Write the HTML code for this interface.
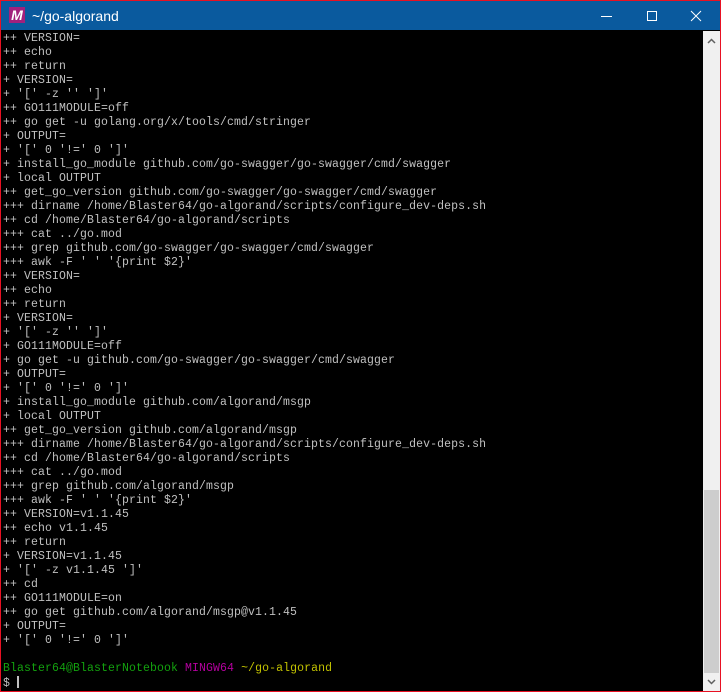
<!DOCTYPE html>
<html><head><style>
html,body{margin:0;padding:0;}
body{width:721px;height:692px;background:#000;position:relative;overflow:hidden;}
.frame{position:absolute;left:0;top:0;width:719px;height:690px;border:1px solid #e81123;}
.title{position:absolute;left:1px;top:1px;width:719px;height:29px;background:#0a5a9e;color:#fff;font:14px "Liberation Sans",sans-serif;}
.icon{position:absolute;left:8px;top:6px;width:16px;height:16px;background:#a2217d;color:#fff;font:bold italic 14px/16px "Liberation Sans",sans-serif;text-align:center;}
.tt{position:absolute;left:31px;top:7px;}
.term{position:absolute;left:3px;top:32px;width:700px;margin:0;color:#c0c0c0;font:11.5px/14px "Liberation Mono",monospace;letter-spacing:0.1px;white-space:pre;}
.sb{position:absolute;left:703px;top:31px;width:17px;height:660px;background:#f0f0f0;}
.thumb{position:absolute;left:1px;top:459px;width:15px;height:183px;background:#cdcdcd;}
.g{color:#13a10e}.m{color:#b4009e}.y{color:#c1c100}
</style></head><body>
<div class="frame"></div>
<div class="title"><div class="icon">M</div><div class="tt">~/go-algorand</div>
<svg style="position:absolute;left:600px;top:8px" width="110" height="16">
<line x1="0" y1="7.5" x2="11" y2="7.5" stroke="#fff"/>
<rect x="46.5" y="2.5" width="9" height="9" fill="none" stroke="#fff"/>
<path d="M90 2 L100 12 M100 2 L90 12" stroke="#fff"/>
</svg></div>
<pre class="term">++ VERSION=
++ echo
++ return
+ VERSION=
+ '[' -z '' ']'
++ GO111MODULE=off
++ go get -u golang.org/x/tools/cmd/stringer
+ OUTPUT=
+ '[' 0 '!=' 0 ']'
+ install_go_module github.com/go-swagger/go-swagger/cmd/swagger
+ local OUTPUT
++ get_go_version github.com/go-swagger/go-swagger/cmd/swagger
+++ dirname /home/Blaster64/go-algorand/scripts/configure_dev-deps.sh
++ cd /home/Blaster64/go-algorand/scripts
+++ cat ../go.mod
+++ grep github.com/go-swagger/go-swagger/cmd/swagger
+++ awk -F ' ' '{print $2}'
++ VERSION=
++ echo
++ return
+ VERSION=
+ '[' -z '' ']'
+ GO111MODULE=off
+ go get -u github.com/go-swagger/go-swagger/cmd/swagger
+ OUTPUT=
+ '[' 0 '!=' 0 ']'
+ install_go_module github.com/algorand/msgp
+ local OUTPUT
++ get_go_version github.com/algorand/msgp
+++ dirname /home/Blaster64/go-algorand/scripts/configure_dev-deps.sh
++ cd /home/Blaster64/go-algorand/scripts
+++ cat ../go.mod
+++ grep github.com/algorand/msgp
+++ awk -F ' ' '{print $2}'
++ VERSION=v1.1.45
++ echo v1.1.45
++ return
+ VERSION=v1.1.45
+ '[' -z v1.1.45 ']'
++ cd
++ GO111MODULE=on
++ go get github.com/algorand/msgp@v1.1.45
+ OUTPUT=
+ '[' 0 '!=' 0 ']'

<span class="g">Blaster64@BlasterNotebook</span> <span class="m">MINGW64</span> <span class="y">~/go-algorand</span>
$ <span style="display:inline-block;width:2px;height:12px;background:#c0c0c0;vertical-align:-2px"></span></pre>
<div class="sb"><div class="thumb"></div>
<svg style="position:absolute;left:4px;top:7px" width="9" height="6"><path d="M1 5 L4.5 1.5 L8 5" stroke="#606060" stroke-width="1.5" fill="none"/></svg>
<svg style="position:absolute;left:4px;top:648px" width="9" height="6"><path d="M1 1 L4.5 4.5 L8 1" stroke="#606060" stroke-width="1.5" fill="none"/></svg>
</div>
</body></html>
